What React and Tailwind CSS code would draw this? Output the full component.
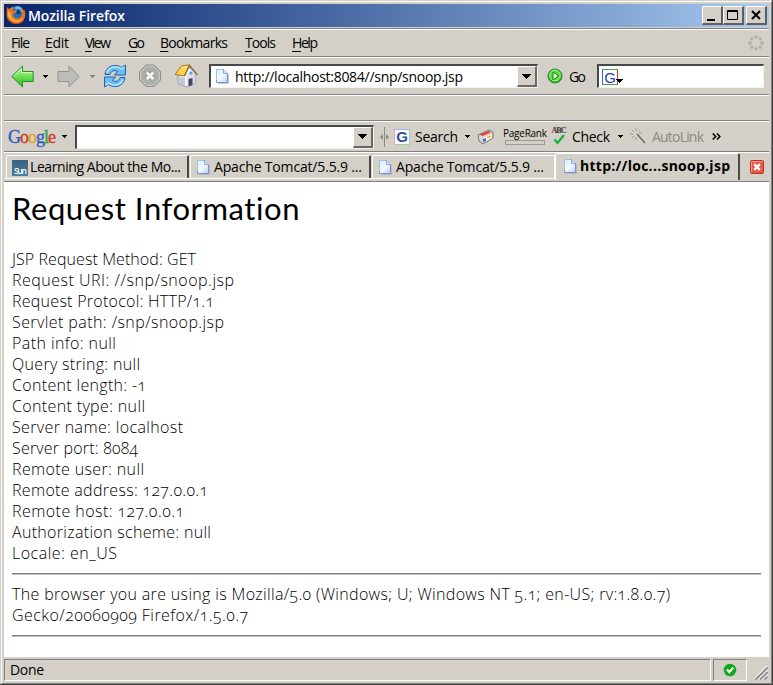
import { useLayoutEffect, useRef } from 'react';

// Tracks a single line of text so that it fills the given width.
function Fit({ w, className = '', children }) {
  const ref = useRef(null);
  useLayoutEffect(() => {
    const el = ref.current;
    el.style.letterSpacing = '0px';
    const natural = el.getBoundingClientRect().width;
    el.style.letterSpacing = `${(w - natural) / Math.max(1, el.textContent.length - 1)}px`;
  }, [w]);
  return (
    <span className={`block shrink-0 whitespace-pre ${className}`} style={{ width: w }}>
      <span ref={ref}>{children}</span>
    </span>
  );
}

const Caret = ({ className = '', color = '#000' }) => (
  <svg className={`shrink-0 ${className}`} width="5" height="3" viewBox="0 0 5 3" shapeRendering="crispEdges">
    <path d="M0 0h5v1H4v1H3v1H2V2H1V1H0z" fill={color} />
  </svg>
);

const Page = ({ className = '' }) => (
  <svg className={`shrink-0 ${className}`} width="13" height="15" viewBox="0 0 13 15">
    <defs>
      <linearGradient id="pg" x1="0" y1="0" x2="1" y2="1">
        <stop offset="0" stopColor="#d5ecff" />
        <stop offset=".5" stopColor="#f4faff" />
        <stop offset="1" stopColor="#b5d0fa" />
      </linearGradient>
    </defs>
    <path d="M2 14.5h10.5V5" stroke="#a9a9b5" fill="none" opacity=".6" />
    <path d="M.5.5h7l4 4v9H.5z" fill="url(#pg)" stroke="#7c8fd0" />
    <path d="M7.5.5v4h4" fill="#d9ebff" stroke="#8aa8dc" />
    <path d="M.5 11V.5h6" stroke="#9cc8f0" fill="none" />
  </svg>
);

const Firefox = () => (
  <svg className="mt-[-2px] ml-[2px] shrink-0" width="20" height="20" viewBox="0 0 20 20">
    <circle cx="10.5" cy="9" r="8" fill="#2d6fb5" />
    <path d="M9 2c4-2 8 1 8 4l-4 3-3-1z" fill="#69b7e8" />
    <path d="M11 4l3 1 1 3-3 2-2-2z" fill="#173d7d" />
    <path d="M1 2l2 2c2-2 4-2 5-1L6.500 5.500l3.500.5c0 2-2 2-3 3 0 3 2 5 5 4.500 3-.5 4.500-3 4-6L14.500 3c2 .5 3 2 3.300 3L18 4c1.500 3 2 7 0 10.500-2 4-6 5-9 4.500C4 18 1 15 .8 10.500.6 7 1 5 1 2z" fill="#e8761c" />
    <path d="M2 6c-.5 5 1 10 6 11.500 4 1 8-1 9-5-2 2.500-5 3.500-8 2.500S4.500 11 4.500 8z" fill="#f9b13c" />
    <path d="M1 11c1 5 5 8 9 8 3 0 6-1.500 7.500-4-3 3-8 3.500-11 1.500-3-1.500-4.500-3-5.500-5.500z" fill="#c9441a" />
  </svg>
);

const Arrow = ({ forward, className = '' }) => (
  <svg className={`shrink-0 ${className}`} width="23" height="23" viewBox="0 0 23 23">
    <defs>
      <linearGradient id="ga" x1="0" y1="0" x2="0" y2="1">
        <stop offset="0" stopColor="#b4f58e" />
        <stop offset=".5" stopColor="#6fe052" />
        <stop offset="1" stopColor="#20b51f" />
      </linearGradient>
    </defs>
    {forward ? (
      <path d="M22.200 11.500L12 1V6.500H1v10h11V22z" fill="#bdbcb8" stroke="#91918f" strokeLinejoin="round" />
    ) : (
      <>
        <path d="M.8 11.500L11.500 1V6.500H22.200v10H11.500V22z" fill="url(#ga)" stroke="#23912c" strokeLinejoin="round" />
        <path d="M3.300 11L10.500 3.800V7.700H21" fill="none" stroke="#d7ffc4" />
      </>
    )}
  </svg>
);

const Reload = () => (
  <svg className="ml-[8px] shrink-0" width="24" height="24" viewBox="0 0 24 24">
    <path d="M2 10.500C3 2 12-1 18.500 3.500L22.500 1v10h-11l3-3.500C11 5.500 8 7 7 10.500z" fill="#6dbdf5" stroke="#1c62b5" strokeLinejoin="round" />
    <path d="M22 13.500c-1 8.500-10 11.500-16.500 7L1.500 23V13h11l-3 3.500c3.500 2 6.500.5 7.500-3z" fill="#6dbdf5" stroke="#1c62b5" strokeLinejoin="round" />
    <path d="M4 8.500c2-5.500 9-7.500 14.500-3.500L21.500 3M20 15.500c-2 5.500-9 7.500-14.500 3.500l-3 2" stroke="#c5ecff" fill="none" strokeWidth="1.400" />
  </svg>
);

const Stop = () => (
  <svg className="ml-[11px] shrink-0" width="24" height="24" viewBox="0 0 24 24">
    <path d="M8 1h8l6.500 6.500v8.500l-6.500 6.500H8L1.500 16V7.500z" fill="#adada9" stroke="#8d8d8a" />
    <path d="M8.500 2.200h7L21.300 8v7.500L15.500 21.300h-7L2.700 15.500V8z" fill="none" stroke="#cfcfcc" />
    <path d="M8.700 8.500l6.600 6.600M15.300 8.500l-6.600 6.600" stroke="#929290" strokeWidth="5" />
    <path d="M8.700 8.500l6.600 6.600M15.300 8.500l-6.600 6.600" stroke="#f5f5f3" strokeWidth="3" />
  </svg>
);

const Home = () => (
  <svg className="ml-[12px] shrink-0" width="25" height="24" viewBox="0 0 25 24">
    <path d="M4 11v8.500l9 3.500 8-3.500V9L15 3z" fill="#f8f8fa" stroke="#8f92a8" />
    <path d="M13 12v11l8-3.500V9L17 5z" fill="#dcdde8" />
    <path d="M4 12l7 2v8l-7-3z" fill="#c3c7da" />
    <path d="M14.500 15l4-1v7l-4 1.500z" fill="#44485b" />
    <circle cx="17" cy="9" r="1.500" fill="#33a7df" />
    <path d="M7.500 2L15.500.8l-5 11.200L1 10.500z" fill="#ffd34b" stroke="#a47a20" strokeLinejoin="round" />
    <path d="M10.500 12L15.500 1.500l8 9.500" stroke="#8e7040" fill="none" strokeWidth="1.500" />
    <path d="M8.500 3.500l5-1" stroke="#fff1a4" />
  </svg>
);

const GoIcon = () => (
  <svg className="ml-[9px] shrink-0" width="16" height="16" viewBox="0 0 16 16">
    <circle cx="8" cy="8" r="7" fill="#2bb523" stroke="#238a25" />
    <circle cx="8" cy="7.500" r="5.300" fill="#58d43c" stroke="#b4f1a0" />
    <path d="M6 4l5.500 4L6 12z" fill="#e9ffe2" stroke="#178a17" />
  </svg>
);

const Throbber = () => (
  <svg className="mr-[5px] ml-auto shrink-0" width="16" height="16" viewBox="0 0 16 16" fill="#b3b1ac">
    <circle cx="8" cy="2" r="1.700" /><circle cx="12.200" cy="3.800" r="1.700" />
    <circle cx="14" cy="8" r="1.900" /><circle cx="12.200" cy="12.200" r="1.700" />
    <circle cx="8" cy="14" r="1.700" /><circle cx="3.800" cy="12.200" r="1.700" />
    <circle cx="2" cy="8" r="1.900" /><circle cx="3.800" cy="3.800" r="1.700" />
  </svg>
);

const sunken = 'border-t-2 border-l-2 border-r border-b border-t-[#484848] border-l-[#484848] border-r-[#f4f2ee] border-b-[#f4f2ee] bg-white';

const DropButton = () => (
  <span className="ml-auto flex h-full w-[20px] shrink-0 items-center justify-center border-t border-r-2 border-b-2 border-l border-t-white border-r-[#6a6864] border-b-[#6a6864] border-l-white bg-[#d4d0c8]">
    <svg width="9" height="5" viewBox="0 0 9 5" shapeRendering="crispEdges"><path d="M0 0h9L4.500 5z" /></svg>
  </span>
);

const WinButton = ({ children, className = '' }) => (
  <span className={`flex h-[19px] w-[21px] shrink-0 border-t border-r-2 border-b-2 border-l border-t-white border-r-[#5f5e5b] border-b-[#5f5e5b] border-l-white bg-[#d4d0c8] ${className}`}>
    <svg width="18" height="16" viewBox="0 0 18 16" fill="none" stroke="#000">{children}</svg>
  </span>
);

const menus = [
  ['File', 19, 'ml-[7px]'], ['Edit', 24, 'ml-[15px]'], ['View', 26, 'ml-[16px]'], ['Go', 17, 'ml-[17px]'],
  ['Bookmarks', 68, 'ml-[15px]'], ['Tools', 31, 'ml-[17px]'], ['Help', 26, 'ml-[16px]'],
];

const info = [
  ['JSP Request Method: GET', 184], ['Request URI: //snp/snoop.jsp', 222], ['Request Protocol: HTTP/1.1', 202],
  ['Servlet path: /snp/snoop.jsp', 212], ['Path info: null', 104], ['Query string: null', 128],
  ['Content length: -1', 134], ['Content type: null', 133], ['Server name: localhost', 171],
  ['Server port: 8084', 126], ['Remote user: null', 132], ['Remote address: 127.0.0.1', 196],
  ['Remote host: 127.0.0.1', 172], ['Authorization scheme: null', 199], ['Locale: en_US', 105],
];

const bar = 'flex shrink-0 items-center border-b border-b-[#808080] border-t border-t-white';

function App() {
  return (
    <div className="h-[685px] w-[773px] overflow-hidden bg-[#d4d0c8] font-['Open_Sans','Noto_Sans',sans-serif] text-[14px] leading-[20px] text-black">
      <div className="flex h-full flex-col border-r border-b border-r-[#404040] border-b-[#404040] pt-px pl-px">
        <div className="flex min-h-0 flex-1 flex-col border-t border-r border-b border-l border-t-white border-r-[#808080] border-b-[#808080] border-l-white pt-[2px] pr-[2px] pl-[2px]">
          <div className="flex h-[23px] shrink-0 items-center bg-linear-to-r from-[#0a246a] to-[#a6caf0]">
            <Firefox />
            <Fit w={97} className="ml-[2px] pt-px font-semibold text-white">Mozilla Firefox</Fit>
            <WinButton className="ml-auto"><path d="M4 13h8" strokeWidth="2" /></WinButton>
            <WinButton><path d="M3.500 3.500h10v9h-10zM3 4.500h11" /></WinButton>
            <WinButton className="mr-[2px] ml-[2px]"><path d="M5 4l8 8M13 4l-8 8" strokeWidth="2" /></WinButton>
          </div>
          <div className="h-[2px] shrink-0 border-b border-[#808080]" />

          <div className={`${bar} h-[28px]`}>
            {menus.map(([label, w, gap]) => (
              <Fit key={label} w={w} className={gap}>
                <u className="underline-offset-[3px]">{label[0]}</u>{label.slice(1)}
              </Fit>
            ))}
            <Throbber />
          </div>

          <div className={`${bar} h-[38px]`}>
            <Arrow className="ml-[7px]" />
            <Caret className="ml-[9px]" />
            <Arrow forward className="ml-[9px]" />
            <Caret className="ml-[10px]" color="#85837f" />
            <Reload />
            <Stop />
            <Home />
            <div className={`${sunken} ml-[10px] flex h-[24px] w-[329px] shrink-0 items-center pl-[5px]`}>
              <Page />
              <Fit w={228} className="ml-[6px] pt-px">http://localhost:8084//snp/snoop.jsp</Fit>
              <DropButton />
            </div>
            <GoIcon />
            <Fit w={17} className="ml-[6px] pt-px">Go</Fit>
            <div className={`${sunken} ml-[11px] flex h-[24px] w-[167px] shrink-0 items-center pl-[3px]`}>
              <span className="mt-px flex h-[16px] w-[16px] items-center justify-center border border-t-[#43a349] border-r-[#e32f25] border-b-[#43a349] border-l-[#3367c9] font-['Liberation_Sans',sans-serif] text-[15px] leading-none text-[#1c3fb8]">G</span>
              <svg className="mt-[9px] ml-[-2px]" width="7" height="4" viewBox="0 0 7 4" shapeRendering="crispEdges"><path d="M0 0h7L3.500 4z" /></svg>
            </div>
          </div>

          <div className={`${bar} h-[26px]`} />

          <div className={`${bar} h-[31px]`}>
            <Fit w={48} className="ml-[4px] font-['Liberation_Serif',serif] text-[18px] [-webkit-text-stroke:0.4px]">
              <span className="text-[#2f5fc4]">G</span><span className="text-[#d23a26]">o</span><span className="text-[#dfa51b]">o</span><span className="text-[#2f5fc4]">g</span><span className="text-[#35a03c]">l</span><span className="text-[#d23a26]">e</span>
            </Fit>
            <Caret className="ml-[6px]" />
            <div className={`${sunken} ml-[8px] flex h-[24px] w-[299px] shrink-0`}><DropButton /></div>
            <svg className="ml-[6px] shrink-0" width="9" height="20" viewBox="0 0 9 20">
              <path d="M4.500 0v20" stroke="#8c8a86" /><path d="M3 7v6L0 10zM6 7v6l3-3z" fill="#8c8a86" />
            </svg>
            <span className="ml-[5px] flex h-[16px] w-[16px] shrink-0 items-center justify-center border border-t-[#a3a9f5] border-r-[#94d69b] border-b-[#94d69b] border-l-[#f1a3a3] bg-white font-['Liberation_Sans',sans-serif] text-[15px] leading-none font-bold text-[#2d4fa5]">G</span>
            <Fit w={43} className="ml-[5px]">Search</Fit>
            <Caret className="ml-[7px]" />
            <svg className="ml-[7px] shrink-0" width="18" height="18" viewBox="0 0 18 18">
              <path d="M1 7l11-5 4 2v6L6 16l-4-3z" fill="#d7d4d1" stroke="#777" />
              <path d="M2.500 6.500l9-3.500 2.500 1.500-8.500 3.500z" fill="#ed3f2b" />
              <path d="M6 10l9-4v4l-8 4z" fill="#fff" />
              <path d="M6 11l3-1v3l-3 1z" fill="#396fd1" />
              <path d="M10 9l4-2v2l-4 2z" fill="#f3b233" />
            </svg>
            <span className="ml-[8px] flex h-[20px] w-[45px] shrink-0 flex-col">
              <Fit w={44} className="text-[10px] leading-[12px]">PageRank</Fit>
              <span className="mt-[1px] ml-[2px] h-[5px] w-[40px] border border-[#9b9995]" />
            </span>
            <span className="ml-[3px] flex h-[19px] w-[16px] shrink-0 flex-col items-center">
              <Fit w={15} className="font-['Liberation_Serif',serif] text-[8px] leading-[8px] font-bold text-[#333]">ABC</Fit>
              <svg width="12" height="10" viewBox="0 0 12 10"><path d="M1.500 4.500L4.500 8 11 0" fill="none" stroke="#13b33a" strokeWidth="2.200" /></svg>
            </span>
            <Fit w={38} className="ml-[5px]">Check</Fit>
            <Caret className="ml-[8px]" />
            <svg className="ml-[7px] shrink-0" width="17" height="17" viewBox="0 0 17 17">
              <path d="M7 6l8 9" stroke="#fff" strokeWidth="3" /><path d="M7 6l8 9" stroke="#77756f" strokeWidth="2" />
              <path d="M6 0v3M6 9v3M0 6h3M9 5h3M2 2l2 2M10 2L8.500 3.500M2 10l2-2" stroke="#999690" />
            </svg>
            <Fit w={52} className="ml-[5px] text-[#8b8985]">AutoLink</Fit>
            <svg className="ml-[8px] shrink-0" width="9" height="7" viewBox="0 0 9 7"><path d="M.7.5l3 3-3 3M4.900.5l3 3-3 3" fill="none" stroke="#000" strokeWidth="1.500" /></svg>
          </div>

          <div className="flex h-[30px] shrink-0 items-start border-t border-b border-t-white border-b-[#808080]">
            <div className="mt-[2px] flex h-[24px] w-[551px] shrink-0 border-b border-white pl-[2px]">
              <div className="flex h-[23px] w-[183px] items-center rounded-t-[2px] border-t border-r-2 border-l border-t-white border-r-[#4a4947] border-l-white pl-[5px]">
                <span className="mt-[2px] flex h-[16px] w-[16px] shrink-0 items-end bg-linear-to-b from-[#36627f] to-[#4d7f9e] pl-[2px]">
                  <Fit w={13} className="text-[9px] leading-[11px] font-semibold text-white">Sun</Fit>
                </span>
                <Fit w={151} className="ml-[2px]">Learning About the Mo...</Fit>
              </div>
              <div className="ml-px flex h-[23px] w-[181px] items-center rounded-t-[2px] border-t border-r-2 border-l border-t-white border-r-[#4a4947] border-l-white pl-[6px]">
                <Page />
                <Fit w={148} className="ml-[4px]">Apache Tomcat/5.5.9 ...</Fit>
              </div>
              <div className="ml-px flex h-[23px] w-[183px] items-center rounded-t-[2px] border-t border-r border-l border-white pl-[6px]">
                <Page />
                <Fit w={148} className="ml-[4px]">Apache Tomcat/5.5.9 ...</Fit>
              </div>
            </div>
            <div className="flex h-[27px] w-[185px] shrink-0 items-center rounded-t-[2px] border-t border-r-2 border-l border-t-white border-r-[#4a4947] border-l-white pb-[2px] pl-[8px]">
              <Page />
              <Fit w={150} className="ml-[3px] font-bold">http://loc...snoop.jsp</Fit>
            </div>
            <svg className="mt-[7px] ml-[10px] shrink-0" width="14" height="14" viewBox="0 0 14 14">
              <rect x=".5" y=".5" width="13" height="13" rx="1" fill="#e45a48" stroke="#c32d23" />
              <path d="M1.500 12.500V1.500h11" fill="none" stroke="#f29a8b" />
              <path d="M4.200 4.200l5.600 5.600M9.800 4.200L4.200 9.800" stroke="#fff" strokeWidth="2.400" />
            </svg>
          </div>

          <div className="h-[475px] shrink-0 bg-white pt-[7px] pr-[8px] pl-[8px] font-['Open_Sans','Lato',sans-serif] text-[16px] leading-[21px] font-light oldstyle-nums">
            <Fit w={288} className="h-[60px] font-['Lato','Open_Sans',sans-serif] text-[31px] leading-[39px] font-normal">Request Information</Fit>
            {info.map(([line, w]) => <Fit key={line} w={w}>{line}</Fit>)}
            <div className="mt-[9px] mb-[9px] h-[2px] border-t border-b border-t-[#808080] border-b-[#bdbdbd]" />
            <Fit w={658}>The browser you are using is Mozilla/5.0 (Windows; U; Windows NT 5.1; en-US; rv:1.8.0.7)</Fit>
            <Fit w={236}>Gecko/20060909 Firefox/1.5.0.7</Fit>
            <div className="mt-[9px] h-[2px] border-t border-b border-t-[#808080] border-b-[#bdbdbd]" />
          </div>

          <div className="flex h-[26px] shrink-0 pt-[2px]">
            <div className="flex h-[22px] w-[707px] shrink-0 items-center border border-t-[#808080] border-r-white border-b-white border-l-[#808080] pl-[5px]">
              <Fit w={34}>Done</Fit>
            </div>
            <div className="ml-[2px] flex h-[22px] w-[34px] shrink-0 items-center justify-center border border-t-[#808080] border-r-white border-b-white border-l-[#808080]">
              <svg width="14" height="14" viewBox="0 0 14 14">
                <circle cx="7" cy="7" r="6.300" fill="#12a81f" />
                <path d="M4 6.500l2.300 2.700L10.300 4.500" fill="none" stroke="#fff" strokeWidth="2" />
              </svg>
            </div>
            <svg className="mt-[7px] ml-[7px] shrink-0" width="14" height="14" viewBox="0 0 14 14">
              <path d="M0 13L13 0M4.500 13.500L13.500 4.500M9 13.500L13.500 9" stroke="#fff" />
              <path d="M1.500 13.500L13.500 1.500M6 13.500L13.500 6M10.500 13.500l3-3" stroke="#808080" strokeWidth="1.500" />
            </svg>
          </div>
        </div>
      </div>
    </div>
  );
}

export default App;
